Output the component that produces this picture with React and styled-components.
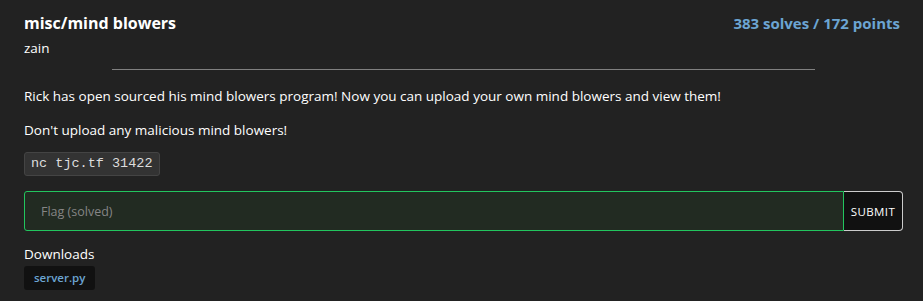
import React from "react";
import styled, { createGlobalStyle } from "styled-components";

const GlobalStyle = createGlobalStyle`
  html, body {
    margin: 0;
    padding: 0;
    background: #222222;
  }
  body {
    font-family: "Open Sans", "Noto Sans", sans-serif;
    color: #ffffff;
  }
`;

const Page = styled.div`
  width: 923px;
  height: 301px;
  box-sizing: border-box;
  padding: 12px 20px 0 24px;
  background: #222222;
`;

const Header = styled.div`
  display: flex;
  justify-content: space-between;
  align-items: flex-start;
`;

const Title = styled.h2`
  margin: 0;
  font-size: 16px;
  font-weight: 700;
  line-height: 22px;
  color: #ffffff;
`;

const Stats = styled.div`
  font-size: 15px;
  font-weight: 700;
  line-height: 22px;
  color: #6ca5d3;
  padding-right: 3px;
`;

const Author = styled.div`
  margin-top: 4px;
  font-size: 13.5px;
  line-height: 20px;
`;

const Rule = styled.hr`
  width: 80%;
  margin: 11px auto 0;
  border: none;
  border-top: 1px solid #808080;
`;

const Paragraph = styled.p`
  margin: ${(p) => p.$top || 0}px 0 0;
  font-size: 13.5px;
  line-height: 20px;
`;

const Code = styled.code`
  display: inline-block;
  margin-top: 12px;
  padding: 2px 6px;
  background: #333333;
  border: 1px solid #444444;
  border-radius: 3px;
  font-family: "Liberation Mono", "DejaVu Sans Mono", monospace;
  font-size: 13.5px;
  line-height: 18px;
  color: #dddddd;
`;

const FlagForm = styled.form`
  display: flex;
  margin-top: 15px;
  height: 40px;
`;

const FlagInput = styled.input`
  flex: 1;
  box-sizing: border-box;
  height: 40px;
  padding: 0 16px;
  background: #222b22;
  border: 1px solid #22c55e;
  border-radius: 3px 0 0 3px;
  font-family: inherit;
  font-size: 12.5px;
  color: #ffffff;
  outline: none;

  &::placeholder {
    color: #858585;
  }
`;

const SubmitButton = styled.button`
  box-sizing: border-box;
  width: 59px;
  height: 40px;
  padding: 0;
  background: #111111;
  border: 1px solid #cccccc;
  border-left: none;
  border-radius: 0 4px 4px 0;
  font-family: inherit;
  font-size: 11.5px;
  letter-spacing: 0.4px;
  color: #ffffff;
`;

const SectionLabel = styled.div`
  margin-top: 13px;
  font-size: 13.5px;
  line-height: 20px;
`;

const FileChip = styled.a`
  display: inline-block;
  margin-top: 2px;
  padding: 3px 10px;
  background: #111111;
  border-radius: 3px;
  font-size: 11.5px;
  font-weight: 600;
  line-height: 18px;
  color: #6ca5d3;
  text-decoration: none;
`;

export default function App() {
  return (
    <>
      <GlobalStyle />
      <Page>
        <Header>
          <Title>misc/mind blowers</Title>
          <Stats>383 solves / 172 points</Stats>
        </Header>
        <Author>zain</Author>
        <Rule />
        <Paragraph $top={16}>
          Rick has open sourced his mind blowers program! Now you can upload
          your own mind blowers and view them!
        </Paragraph>
        <Paragraph $top={14}>Don't upload any malicious mind blowers!</Paragraph>
        <Code>nc tjc.tf 31422</Code>
        <FlagForm onSubmit={(e) => e.preventDefault()}>
          <FlagInput placeholder="Flag (solved)" />
          <SubmitButton type="submit">SUBMIT</SubmitButton>
        </FlagForm>
        <SectionLabel>Downloads</SectionLabel>
        <FileChip href="#">server.py</FileChip>
      </Page>
    </>
  );
}
